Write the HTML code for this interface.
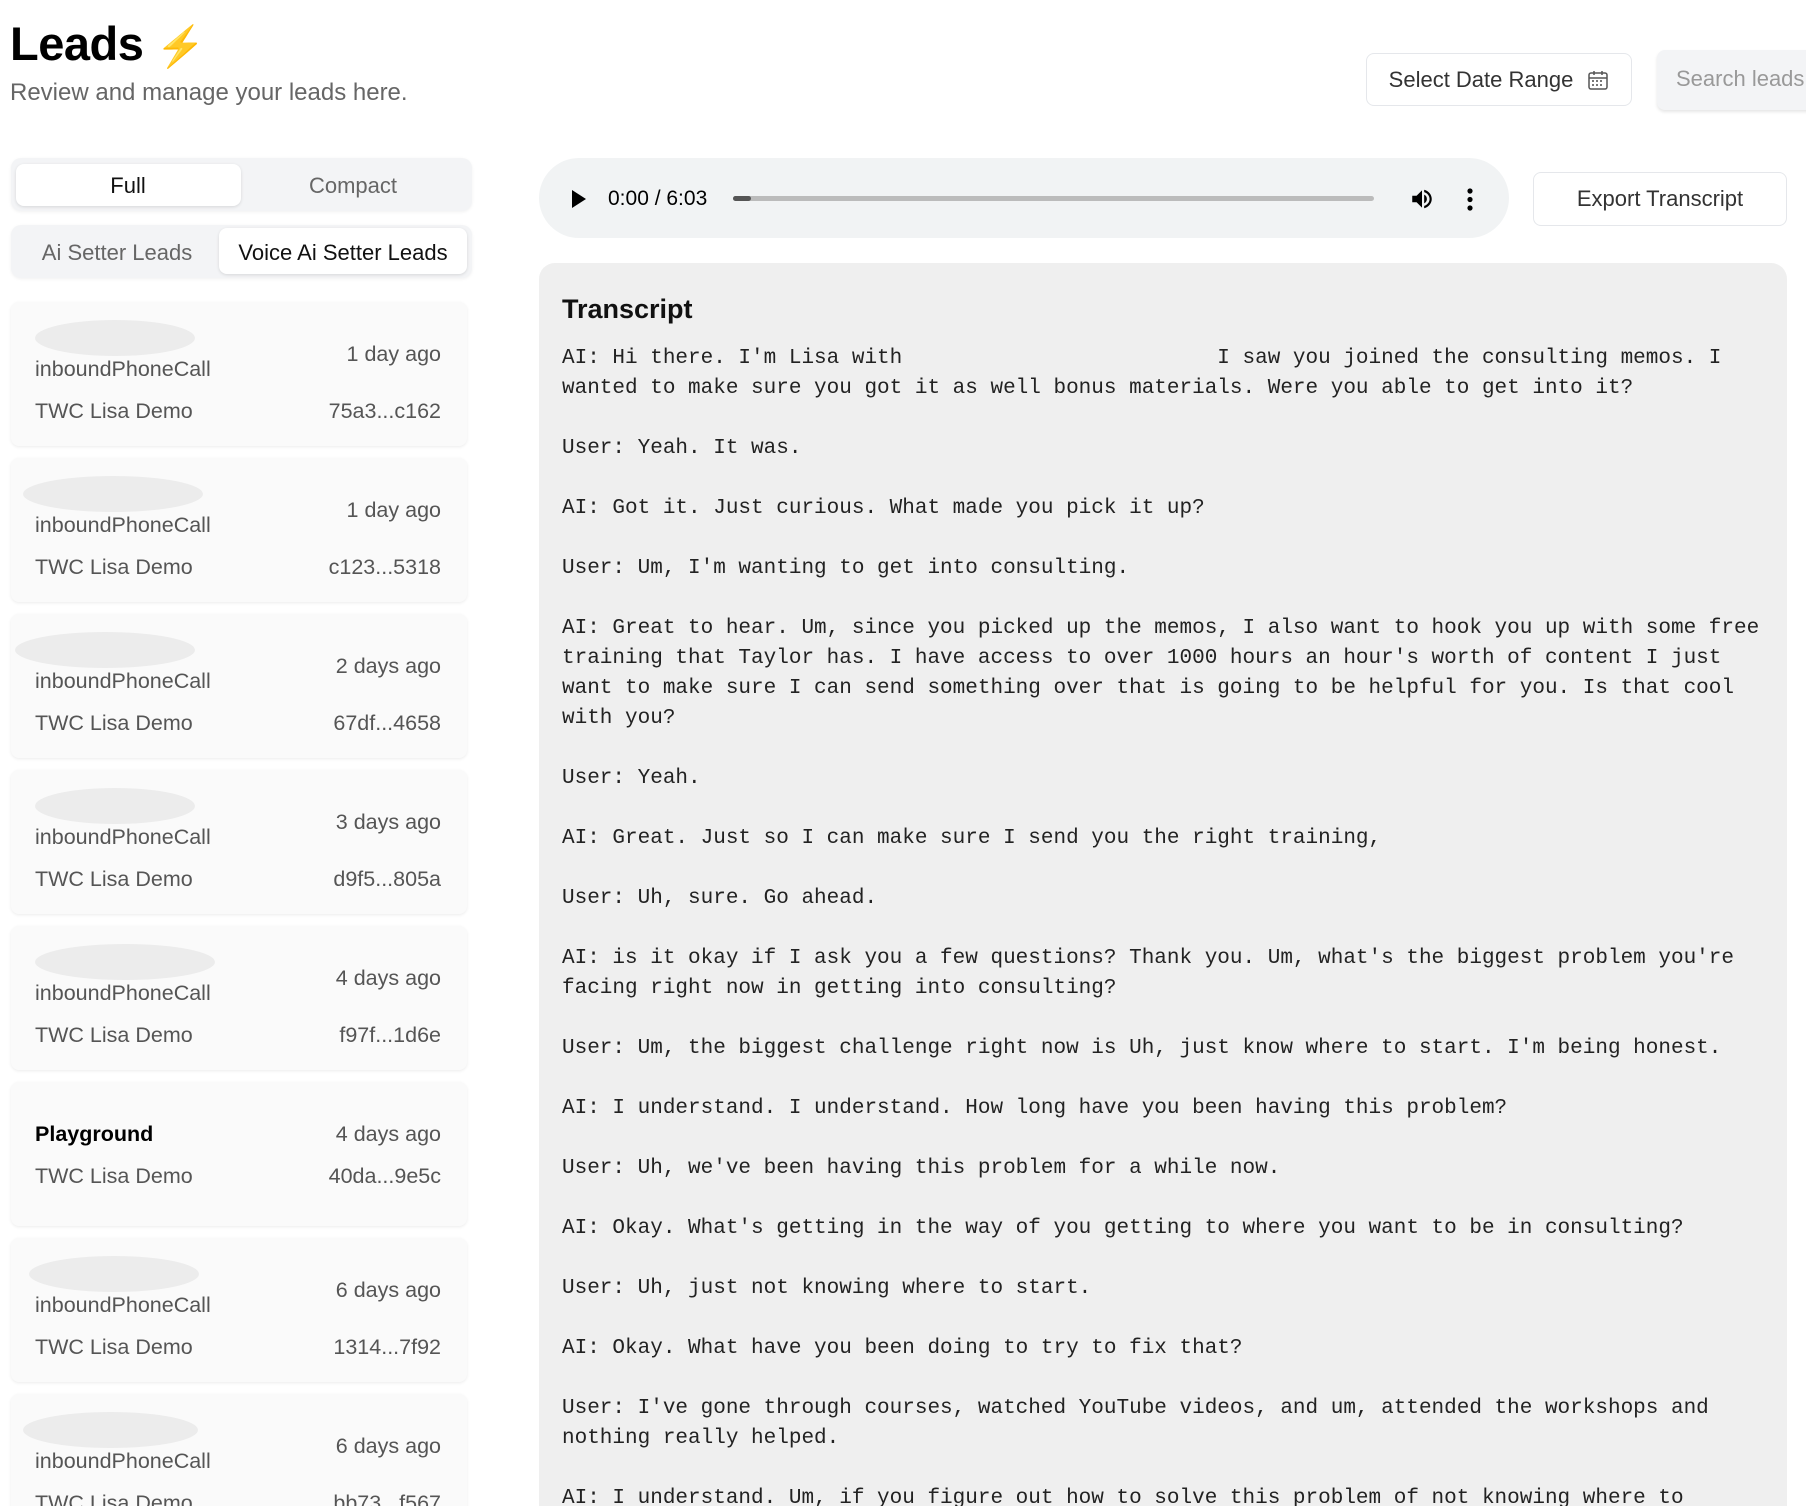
<!DOCTYPE html>
<html><head><meta charset="utf-8"><style>
*{box-sizing:border-box;margin:0;padding:0}
html,body{width:1806px;height:1506px;overflow:hidden}
body{background:#fff;font-family:"Liberation Sans",sans-serif;position:relative;color:#111}
.abs{position:absolute}
h1{position:absolute;left:10px;top:16px;font-size:47px;font-weight:bold;color:#000;letter-spacing:-0.5px}
.sub{left:10px;top:79px;font-size:24px;color:#666}
.btn{border:1px solid #e5e7eb;border-radius:8px;background:#fff;font-size:22px;color:#333;display:flex;align-items:center;justify-content:center}
.seg{background:#f3f4f6;border-radius:10px;box-shadow:0 1px 3px rgba(0,0,0,.06)}
.segb{position:absolute;background:#fff;border-radius:8px;box-shadow:0 1px 3px rgba(0,0,0,.12)}
.segt{position:absolute;font-size:22px;transform:translateX(-50%);white-space:nowrap}
.card{position:absolute;left:11px;width:456px;height:144px;background:#fafafa;border-radius:8px;box-shadow:0 1px 3px rgba(0,0,0,.08);font-size:21.5px;color:#555}
.card .blob{position:absolute;left:24px;top:18px;width:160px;height:36px;border-radius:50%;background:#ececec}
.card .l1{position:absolute;left:24px;top:55px}
.card .l2{position:absolute;left:24px;top:97px}
.card .r1{position:absolute;right:26px;top:40px}
.card .r2{position:absolute;right:26px;top:97px}
pre{position:absolute;left:562px;top:344px;font-family:"Liberation Mono",monospace;font-size:21px;line-height:30px;color:#222}
</style></head><body>
<h1>Leads <span style="color:#f5c518;font-weight:normal;font-size:40px">⚡</span></h1>
<div class="abs sub">Review and manage your leads here.</div>

<div class="abs btn" style="left:1366px;top:53px;width:266px;height:53px">Select Date Range
<svg width="22" height="22" viewBox="0 0 22 22" style="margin-left:14px"><rect x="2" y="4" width="18" height="16" rx="2" fill="none" stroke="#555" stroke-width="1.5"/><line x1="2" y1="9" x2="20" y2="9" stroke="#555" stroke-width="1.5"/><line x1="7" y1="2" x2="7" y2="6" stroke="#555" stroke-width="1.5"/><line x1="15" y1="2" x2="15" y2="6" stroke="#555" stroke-width="1.5"/><g fill="#777"><rect x="5" y="11" width="2" height="2"/><rect x="9" y="11" width="2" height="2"/><rect x="13" y="11" width="2" height="2"/><rect x="5" y="15" width="2" height="2"/><rect x="9" y="15" width="2" height="2"/><rect x="13" y="15" width="2" height="2"/></g></svg></div>
<div class="abs" style="left:1657px;top:50px;width:160px;height:60px;background:#f3f4f6;border-radius:8px;box-shadow:0 2px 3px rgba(0,0,0,.1);font-size:22px;color:#999;padding:16px 0 0 19px;white-space:nowrap">Search leads...</div>

<div class="abs seg" style="left:11px;top:158px;width:461px;height:53px"></div>
<div class="segb" style="left:16px;top:164px;width:225px;height:42px"></div>
<div class="segt" style="left:128px;top:173px;color:#111">Full</div>
<div class="segt" style="left:353px;top:173px;color:#666">Compact</div>

<div class="abs seg" style="left:11px;top:225px;width:461px;height:53px"></div>
<div class="segb" style="left:219px;top:228px;width:248px;height:46px"></div>
<div class="segt" style="left:117px;top:240px;color:#666">Ai Setter Leads</div>
<div class="segt" style="left:343px;top:240px;color:#111">Voice Ai Setter Leads</div>

<div class="card" style="top:302px"><div class="blob"></div><div class="l1">inboundPhoneCall</div><div class="l2">TWC Lisa Demo</div><div class="r1">1 day ago</div><div class="r2">75a3...c162</div></div>
<div class="card" style="top:458px"><div class="blob" style="left:12px;width:180px"></div><div class="l1">inboundPhoneCall</div><div class="l2">TWC Lisa Demo</div><div class="r1">1 day ago</div><div class="r2">c123...5318</div></div>
<div class="card" style="top:614px"><div class="blob" style="left:4px;width:180px"></div><div class="l1">inboundPhoneCall</div><div class="l2">TWC Lisa Demo</div><div class="r1">2 days ago</div><div class="r2">67df...4658</div></div>
<div class="card" style="top:770px"><div class="blob"></div><div class="l1">inboundPhoneCall</div><div class="l2">TWC Lisa Demo</div><div class="r1">3 days ago</div><div class="r2">d9f5...805a</div></div>
<div class="card" style="top:926px"><div class="blob" style="left:24px;width:180px"></div><div class="l1">inboundPhoneCall</div><div class="l2">TWC Lisa Demo</div><div class="r1">4 days ago</div><div class="r2">f97f...1d6e</div></div>
<div class="card" style="top:1082px"><div class="l1" style="top:40px;color:#000;font-weight:bold">Playground</div><div class="l2" style="top:82px">TWC Lisa Demo</div><div class="r1">4 days ago</div><div class="r2" style="top:82px">40da...9e5c</div></div>
<div class="card" style="top:1238px"><div class="blob" style="left:18px;width:170px"></div><div class="l1">inboundPhoneCall</div><div class="l2">TWC Lisa Demo</div><div class="r1">6 days ago</div><div class="r2">1314...7f92</div></div>
<div class="card" style="top:1394px"><div class="blob" style="left:12px;width:175px"></div><div class="l1">inboundPhoneCall</div><div class="l2">TWC Lisa Demo</div><div class="r1">6 days ago</div><div class="r2">bb73...f567</div></div>

<div class="abs" style="left:539px;top:158px;width:970px;height:80px;background:#f1f3f4;border-radius:40px"></div>
<svg class="abs" style="left:570px;top:189px" width="18" height="20"><path d="M2 1 L16 10 L2 19 Z" fill="#000"/></svg>
<div class="abs" style="left:608px;top:187px;font-size:21px;color:#000">0:00 / 6:03</div>
<div class="abs" style="left:733px;top:196px;width:641px;height:5px;background:#bbb;border-radius:3px"></div>
<div class="abs" style="left:733px;top:196px;width:18px;height:5px;background:#555;border-radius:3px"></div>
<svg class="abs" style="left:1409px;top:186px" width="26" height="26" viewBox="0 0 24 24"><path d="M3 9v6h4l5 5V4L7 9H3zm13.5 3A4.5 4.5 0 0 0 14 7.97v8.05c1.48-.73 2.5-2.25 2.5-4.02z" fill="#000"/><path d="M14 3.5v2.1c2.9.9 5 3.5 5 6.4s-2.1 5.5-5 6.4v2.1c4-.9 7-4.5 7-8.5s-3-7.6-7-8.5z" fill="#000"/></svg>
<svg class="abs" style="left:1465px;top:187px" width="10" height="26"><circle cx="5" cy="4" r="2.6"/><circle cx="5" cy="12.5" r="2.6"/><circle cx="5" cy="21" r="2.6"/></svg>
<div class="abs btn" style="left:1533px;top:172px;width:254px;height:54px">Export Transcript</div>

<div class="abs" style="left:539px;top:263px;width:1248px;height:1300px;background:#efefef;border-radius:16px"></div>
<div class="abs" style="left:562px;top:294px;font-size:27px;font-weight:bold;color:#111">Transcript</div>
<pre>AI: Hi there. I'm Lisa with                         I saw you joined the consulting memos. I
wanted to make sure you got it as well bonus materials. Were you able to get into it?

User: Yeah. It was.

AI: Got it. Just curious. What made you pick it up?

User: Um, I'm wanting to get into consulting.

AI: Great to hear. Um, since you picked up the memos, I also want to hook you up with some free
training that Taylor has. I have access to over 1000 hours an hour's worth of content I just
want to make sure I can send something over that is going to be helpful for you. Is that cool
with you?

User: Yeah.

AI: Great. Just so I can make sure I send you the right training,

User: Uh, sure. Go ahead.

AI: is it okay if I ask you a few questions? Thank you. Um, what's the biggest problem you're
facing right now in getting into consulting?

User: Um, the biggest challenge right now is Uh, just know where to start. I'm being honest.

AI: I understand. I understand. How long have you been having this problem?

User: Uh, we've been having this problem for a while now.

AI: Okay. What's getting in the way of you getting to where you want to be in consulting?

User: Uh, just not knowing where to start.

AI: Okay. What have you been doing to try to fix that?

User: I've gone through courses, watched YouTube videos, and um, attended the workshops and
nothing really helped.

AI: I understand. Um, if you figure out how to solve this problem of not knowing where to</pre>
</body></html>
